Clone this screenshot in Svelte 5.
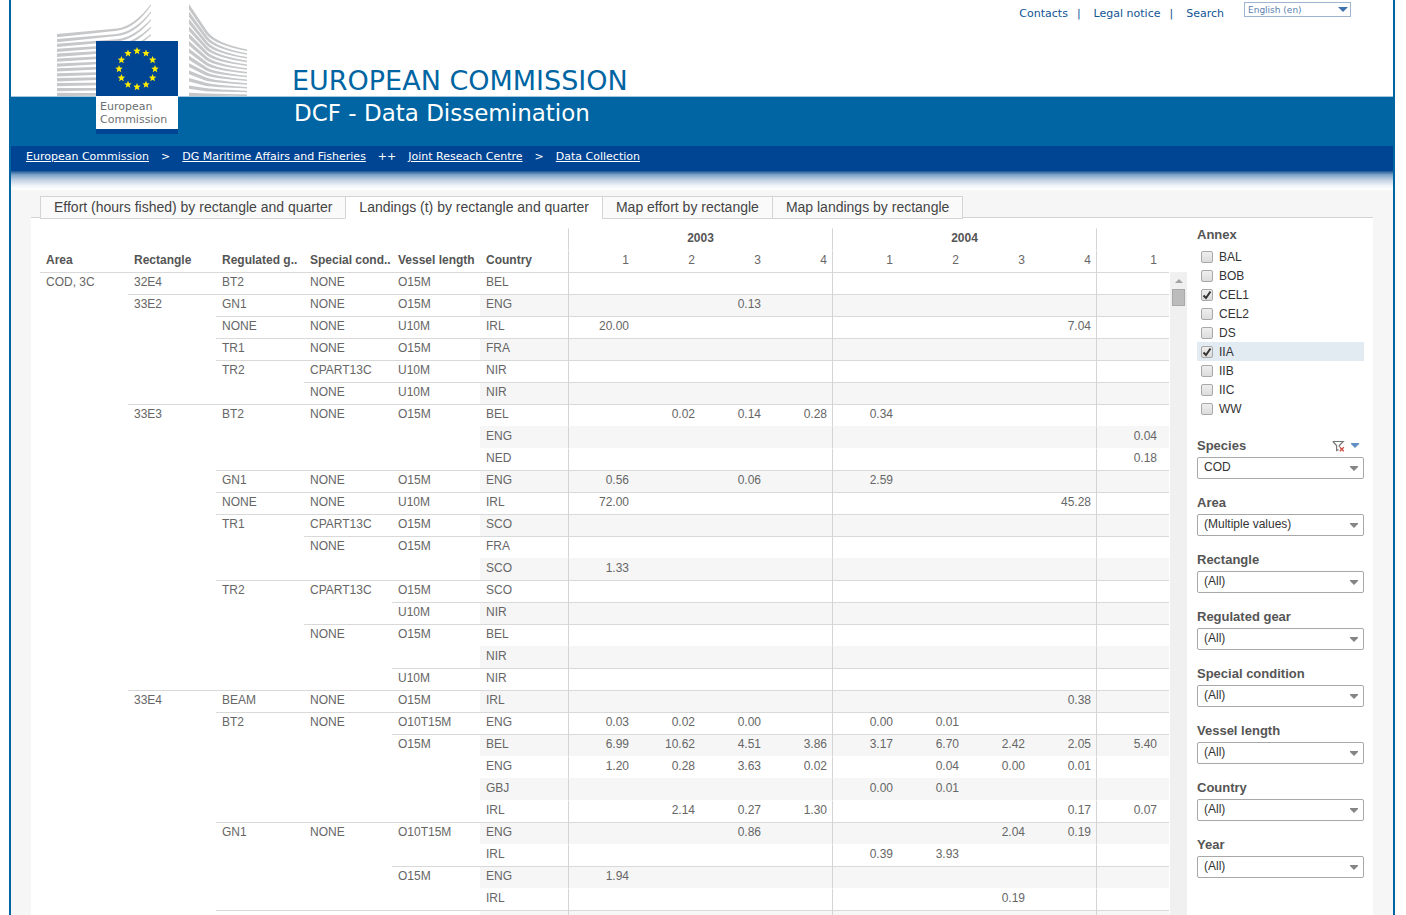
<script>
  const annexes = [
    ['BAL', false], ['BOB', false], ['CEL1', true], ['CEL2', false], ['DS', false],
    ['IIA', true], ['IIB', false], ['IIC', false], ['WW', false]
  ];
  const filters = [
    ['Species', 'COD'], ['Area', '(Multiple values)'], ['Rectangle', '(All)'],
    ['Regulated gear', '(All)'], ['Special condition', '(All)'],
    ['Vessel length', '(All)'], ['Country', '(All)'], ['Year', '(All)']
  ];
  const tabs = [
    'Effort (hours fished) by rectangle and quarter',
    'Landings (t) by rectangle and quarter',
    'Map effort by rectangle',
    'Map landings by rectangle'
  ];
  const dims = ['Area', 'Rectangle', 'Regulated g..', 'Special cond..', 'Vessel length', 'Country'];
  const quarters = [1, 2, 3, 4, 1, 2, 3, 4, 1];
  // Each line: dimension labels | nine quarterly values, blank where there is no change or no catch
  const rows = `COD, 3C;32E4;BT2;NONE;O15M;BEL|
;33E2;GN1;NONE;O15M;ENG|;;0.13
;;NONE;NONE;U10M;IRL|20.00;;;;;;;7.04
;;TR1;NONE;O15M;FRA|
;;TR2;CPART13C;U10M;NIR|
;;;NONE;U10M;NIR|
;33E3;BT2;NONE;O15M;BEL|;0.02;0.14;0.28;0.34
;;;;;ENG|;;;;;;;;0.04
;;;;;NED|;;;;;;;;0.18
;;GN1;NONE;O15M;ENG|0.56;;0.06;;2.59
;;NONE;NONE;U10M;IRL|72.00;;;;;;;45.28
;;TR1;CPART13C;O15M;SCO|
;;;NONE;O15M;FRA|
;;;;;SCO|1.33
;;TR2;CPART13C;O15M;SCO|
;;;;U10M;NIR|
;;;NONE;O15M;BEL|
;;;;;NIR|
;;;;U10M;NIR|
;33E4;BEAM;NONE;O15M;IRL|;;;;;;;0.38
;;BT2;NONE;O10T15M;ENG|0.03;0.02;0.00;;0.00;0.01
;;;;O15M;BEL|6.99;10.62;4.51;3.86;3.17;6.70;2.42;2.05;5.40
;;;;;ENG|1.20;0.28;3.63;0.02;;0.04;0.00;0.01
;;;;;GBJ|;;;;0.00;0.01
;;;;;IRL|;2.14;0.27;1.30;;;;0.17;0.07
;;GN1;NONE;O10T15M;ENG|;;0.86;;;;2.04;0.19
;;;;;IRL|;;;;0.39;3.93
;;;;O15M;ENG|1.94
;;;;;IRL|;;;;;;0.19`.split('\n').map((line) => {
    const [labels, values] = line.split('|').map((part) => part.split(';'));
    return { labels, values: quarters.map((_, i) => values[i] ?? ''), level: labels.findIndex((l) => l) };
  });
  rows.push({ labels: Array(6).fill(''), values: Array(9).fill(''), level: 2 });

  const star = Array.from({ length: 10 }, (_, i) => {
    const r = i % 2 ? 1.7 : 3.9;
    const a = (i * Math.PI) / 5;
    return `${(r * Math.sin(a)).toFixed(2)},${(-r * Math.cos(a)).toFixed(2)}`;
  }).join(' ');
  const stars = Array.from({ length: 12 }, (_, i) => [
    80 + 18 * Math.sin((i * Math.PI) / 6),
    69 - 18 * Math.cos((i * Math.PI) / 6)
  ]);

  // Tapering slats of the two wings of the building
  const wings = Array.from({ length: 13 }, (_, i) => {
    const a = 34 + i * 4.9;
    const b = 28.5 + i * 5.4;
    const c = 4 + i * 7.5;
    const p = 4 + i * 7.4;
    const q = 31 + i * 5.2;
    const k = 43 + i * 4.2;
    const e = 49.5 + i * 3.75;
    const thick = 5.5 - i * 0.2;
    return [
      `M0 ${a}L60 ${b}Q77 ${b - 2} 94 ${c}V${c + 1.6}Q78 ${b + 0.5} 60 ${b + 2.2}L0 ${a + 3.3}Z`,
      `M132 ${p}L150 ${q}Q158 ${k} 190 ${e}V${e + 1.4}Q158 ${k + 2.2} 149 ${q + 3}L132 ${p + thick}Z`
    ];
  });
</script>

<div class="page">
  <header>
    <svg class="logo" viewBox="0 0 190 136" width="190" height="136" aria-label="European Commission">
      <clipPath id="roof"><rect width="190" height="96" /></clipPath>
      <g fill="#c6c7c9" clip-path="url(#roof)">
        {#each wings as [west, east]}
          <path d={west} />
          <path d={east} />
        {/each}
      </g>
      <rect x="39" y="41" width="82" height="93" fill="#004494" />
      <rect x="39" y="96" width="82" height="33" fill="#fff" />
      {#each stars as [x, y]}
        <polygon points={star} transform="translate({x} {y})" fill="#ffed00" />
      {/each}
      <text x="43" y="110">European</text>
      <text x="43" y="123">Commission</text>
    </svg>
    <div class="top">
      <h1>EUROPEAN COMMISSION</h1>
      <nav class="tools">
        <a href="#contacts">Contacts</a><i>|</i><a href="#legal">Legal notice</a><i>|</i><a href="#search">Search</a>
        <span class="lang">
          <select aria-label="Language"><option>English (en)</option></select>
          <svg viewBox="0 0 10 5" width="10" height="5"><path d="M0 0H10L5 5Z" fill="#3f73ae" /></svg>
        </span>
      </nav>
    </div>
    <div class="banner"><h2>DCF - Data Dissemination</h2></div>
    <nav class="crumbs">
      <a href="#ec">European Commission</a><span>&gt;</span>
      <a href="#mare">DG Maritime Affairs and Fisheries</a><span>++</span>
      <a href="#jrc">Joint Reseach Centre</a><span>&gt;</span>
      <a href="#data">Data Collection</a>
    </nav>
    <div class="shade"></div>
  </header>

  <main>
    <div class="tabs">
      {#each tabs as tab, i}
        <button class:active={i === 1}>{tab}</button>
      {/each}
    </div>
    <div class="panel">
      <div class="grid">
        <table>
          <colgroup>
            {#each dims as _}<col class="dim" />{/each}
            {#each quarters as _, i}<col class={i === 8 ? 'last' : 'qtr'} />{/each}
          </colgroup>
          <thead>
            <tr>
              <th colspan="6"></th>
              <th class="year rule" colspan="4">2003</th>
              <th class="year rule" colspan="4">2004</th>
              <th class="rule"></th>
            </tr>
            <tr>
              {#each dims as dim}<th>{dim}</th>{/each}
              {#each quarters as q, i}<th class="num" class:rule={i % 4 === 0}>{q}</th>{/each}
            </tr>
          </thead>
          <tbody>
            {#each rows as row}
              <tr>
                {#each row.labels as label, i}
                  <td class:line={i >= row.level && row.level < 5} class:band={i === 5}>{label}</td>
                {/each}
                {#each row.values as value, i}
                  <td class="num band" class:rule={i % 4 === 0} class:line={row.level < 5}>{value}</td>
                {/each}
              </tr>
            {/each}
          </tbody>
        </table>
      </div>
      <div class="track">
        <svg viewBox="0 0 8 4" width="8" height="4"><path d="M0 4L4 0L8 4Z" fill="#a3a3a3" /></svg>
        <div class="thumb"></div>
      </div>
      <aside>
        <fieldset>
          <legend>Annex</legend>
          {#each annexes as [name, on]}
            <label class:hover={name === 'IIA'}><input type="checkbox" checked={on} />{name}</label>
          {/each}
        </fieldset>
        {#each filters as [name, value], i}
          <div class="filter">
            <div class="name">
              <label for="filter-{i}">{name}</label>
              {#if i === 0}
                <button aria-label="Clear filter">
                  <svg viewBox="0 0 13 12" width="13" height="12" fill="none">
                    <path d="M.8 1.5H11.2L7.3 5.5V7M.8 1.5L4.6 5.5V10.5L6.5 9.5" stroke="#777" stroke-width="1.2" />
                    <path d="M7.8 7.2L11.8 11.2M11.8 7.2L7.8 11.2" stroke="#cf4a41" stroke-width="1.3" />
                  </svg>
                </button>
                <button aria-label="Filter options">
                  <svg viewBox="0 0 8 5" width="8" height="5"><path d="M0 0H8V1L4 5L0 1Z" fill="#5f8fc4" /></svg>
                </button>
              {/if}
            </div>
            <div class="pick">
              <select id="filter-{i}"><option>{value}</option></select>
              <svg viewBox="0 0 8 5" width="8" height="5"><path d="M0 0H8V1L4 5L0 1Z" fill="#858585" /></svg>
            </div>
          </div>
        {/each}
      </aside>
    </div>
  </main>
</div>

<style>
  :global(body) { margin: 0; background: #fff; }
  .page {
    box-sizing: border-box;
    height: 100vh;
    margin: 0 11px 0 9px;
    border: solid #0065a2;
    border-width: 0 2px;
    display: flex;
    flex-direction: column;
    overflow: hidden;
    background: #f6f6f6;
    font: 12px/22px "Liberation Sans", Arial, sans-serif;
    color: #666;
  }
  header { position: relative; flex: none; font-family: "DejaVu Sans", Verdana, sans-serif; }
  .logo { position: absolute; left: 46px; top: 0; }
  .logo text { font: 11px "DejaVu Sans", sans-serif; fill: #6b7073; }
  .top {
    box-sizing: border-box;
    height: 97px;
    padding-left: 281px;
    display: flex;
    justify-content: space-between;
    background: #fff;
    border-bottom: 1px solid #a5c6de;
  }
  h1, h2 { margin: 0; font-weight: 400; }
  h1 { align-self: flex-end; font-size: 27px; line-height: 30px; color: #0065a2; }
  .tools { display: flex; align-items: flex-start; padding-right: 42px; font-size: 11px; line-height: 27px; }
  .tools a { color: #0f5494; text-decoration: none; }
  .tools i { font-style: normal; color: #0f5494; margin: 0 13px 0 9px; }
  .lang { display: flex; align-items: center; margin: 2px 0 0 20px; }
  .lang select {
    appearance: none;
    width: 107px;
    height: 15px;
    padding: 0 3px;
    border: 1px solid #9db4d0;
    border-radius: 0;
    background: #fff;
    font: 9px "DejaVu Sans", sans-serif;
    color: #5b7fae;
  }
  .lang svg { margin-left: -13px; margin-right: 3px; pointer-events: none; }
  .banner { height: 49px; padding-left: 283px; background: #0065a2; color: #fff; }
  h2 { font-size: 23px; line-height: 33px; }
  .crumbs {
    height: 25px;
    padding-left: 15px;
    display: flex;
    gap: 12px;
    background: #004494;
    color: #fff;
    font-size: 11px;
    line-height: 21px;
  }
  .crumbs a { color: #fff; }
  .shade { height: 19px; background: linear-gradient(#1c5796, #7fa3c8 20%, #c5d5e5 50%, #f3f6f9 80%, #fff); }
  main { flex: 1; min-height: 0; display: flex; flex-direction: column; padding: 6px 20px 0; }
  .tabs { display: flex; padding-left: 9px; position: relative; z-index: 1; margin-bottom: -2px; }
  .tabs button {
    height: 23px;
    padding: 0 13px 2px;
    border: 1px solid #d4d4d4;
    border-right: 0;
    background: #fafafa;
    font: 14px "Liberation Sans", Arial, sans-serif;
    color: #444;
  }
  .tabs button:last-child { border-right: 1px solid #d4d4d4; }
  .tabs .active { background: #fff; border-bottom-color: #fff; }
  .panel { flex: 1; min-height: 0; display: flex; background: #fff; border-top: 1px solid #d4d4d4; }
  .grid { flex: 1; min-width: 0; padding: 10px 0 0 9px; overflow: hidden; }
  table { width: 100%; table-layout: fixed; border-collapse: separate; border-spacing: 0; }
  .dim { width: 88px; }
  .qtr { width: 66px; }
  .last { width: 73px; }
  tr { height: 22px; }
  th, td {
    box-sizing: border-box;
    height: 22px;
    padding: 0 0 0 6px;
    line-height: 18px;
    text-align: left;
    vertical-align: top;
    white-space: nowrap;
    border-top: 1px solid transparent;
    background-clip: padding-box;
  }
  th { color: #555; }
  th.year { text-align: center; padding: 0; }
  .num { text-align: right; padding: 0 5px 0 0; font-weight: 400; color: #666; }
  .num:last-child { padding-right: 12px; }
  .rule { border-left: 1px solid #d4d4d4; }
  .line { border-top-color: #d9d9d9; }
  tbody tr:nth-child(even) .band { background-color: #f6f6f6; background-clip: border-box; }
  .track { width: 17px; margin: 54px 0 0 1px; background: #f0f0f0; display: flex; flex-direction: column; align-items: center; }
  .track svg { margin: 7px 0 6px; flex: none; }
  .thumb { box-sizing: border-box; width: 13px; height: 17px; background: #bcbcbc; border: 1px solid #a8a8a8; }
  aside { width: 167px; margin: 6px 9px 0 10px; }
  fieldset { margin: 0 0 16px; padding: 0; border: 0; }
  legend, .name { padding: 0; font-size: 13px; font-weight: 700; color: #555; }
  legend { line-height: 22px; margin-bottom: 1px; }
  fieldset label { display: flex; align-items: center; height: 19px; padding-left: 4px; gap: 6px; color: #333; }
  .hover { background: #e2eaf2; }
  input {
    appearance: none;
    box-sizing: border-box;
    width: 12px;
    height: 12px;
    margin: 0;
    border: 1px solid #a8a8a8;
    border-radius: 2px;
    background: linear-gradient(#eee, #dcdcdc);
  }
  input:checked {
    background: url("data:image/svg+xml,%3Csvg xmlns='http://www.w3.org/2000/svg' viewBox='0 0 10 10'%3E%3Cpath d='M1.5 5.5L4 8L8.5 1.5' fill='none' stroke='%23333' stroke-width='2'/%3E%3C/svg%3E"), linear-gradient(#eee, #dcdcdc);
  }
  .filter { margin-bottom: 12px; }
  .name { display: flex; align-items: center; gap: 6px; height: 23px; }
  .name label { flex: 1; }
  .name button { display: flex; padding: 0; border: 0; background: none; }
  .name button:last-child { margin-right: 5px; }
  .pick { display: flex; align-items: center; }
  .pick select {
    appearance: none;
    flex: 1;
    height: 22px;
    padding: 0 6px 2px;
    border: 1px solid #a8a8a8;
    border-radius: 2px;
    background: #fff;
    font: 12px "Liberation Sans", Arial, sans-serif;
    color: #333;
  }
  .pick svg { margin-left: -14px; margin-right: 6px; pointer-events: none; }
</style>
